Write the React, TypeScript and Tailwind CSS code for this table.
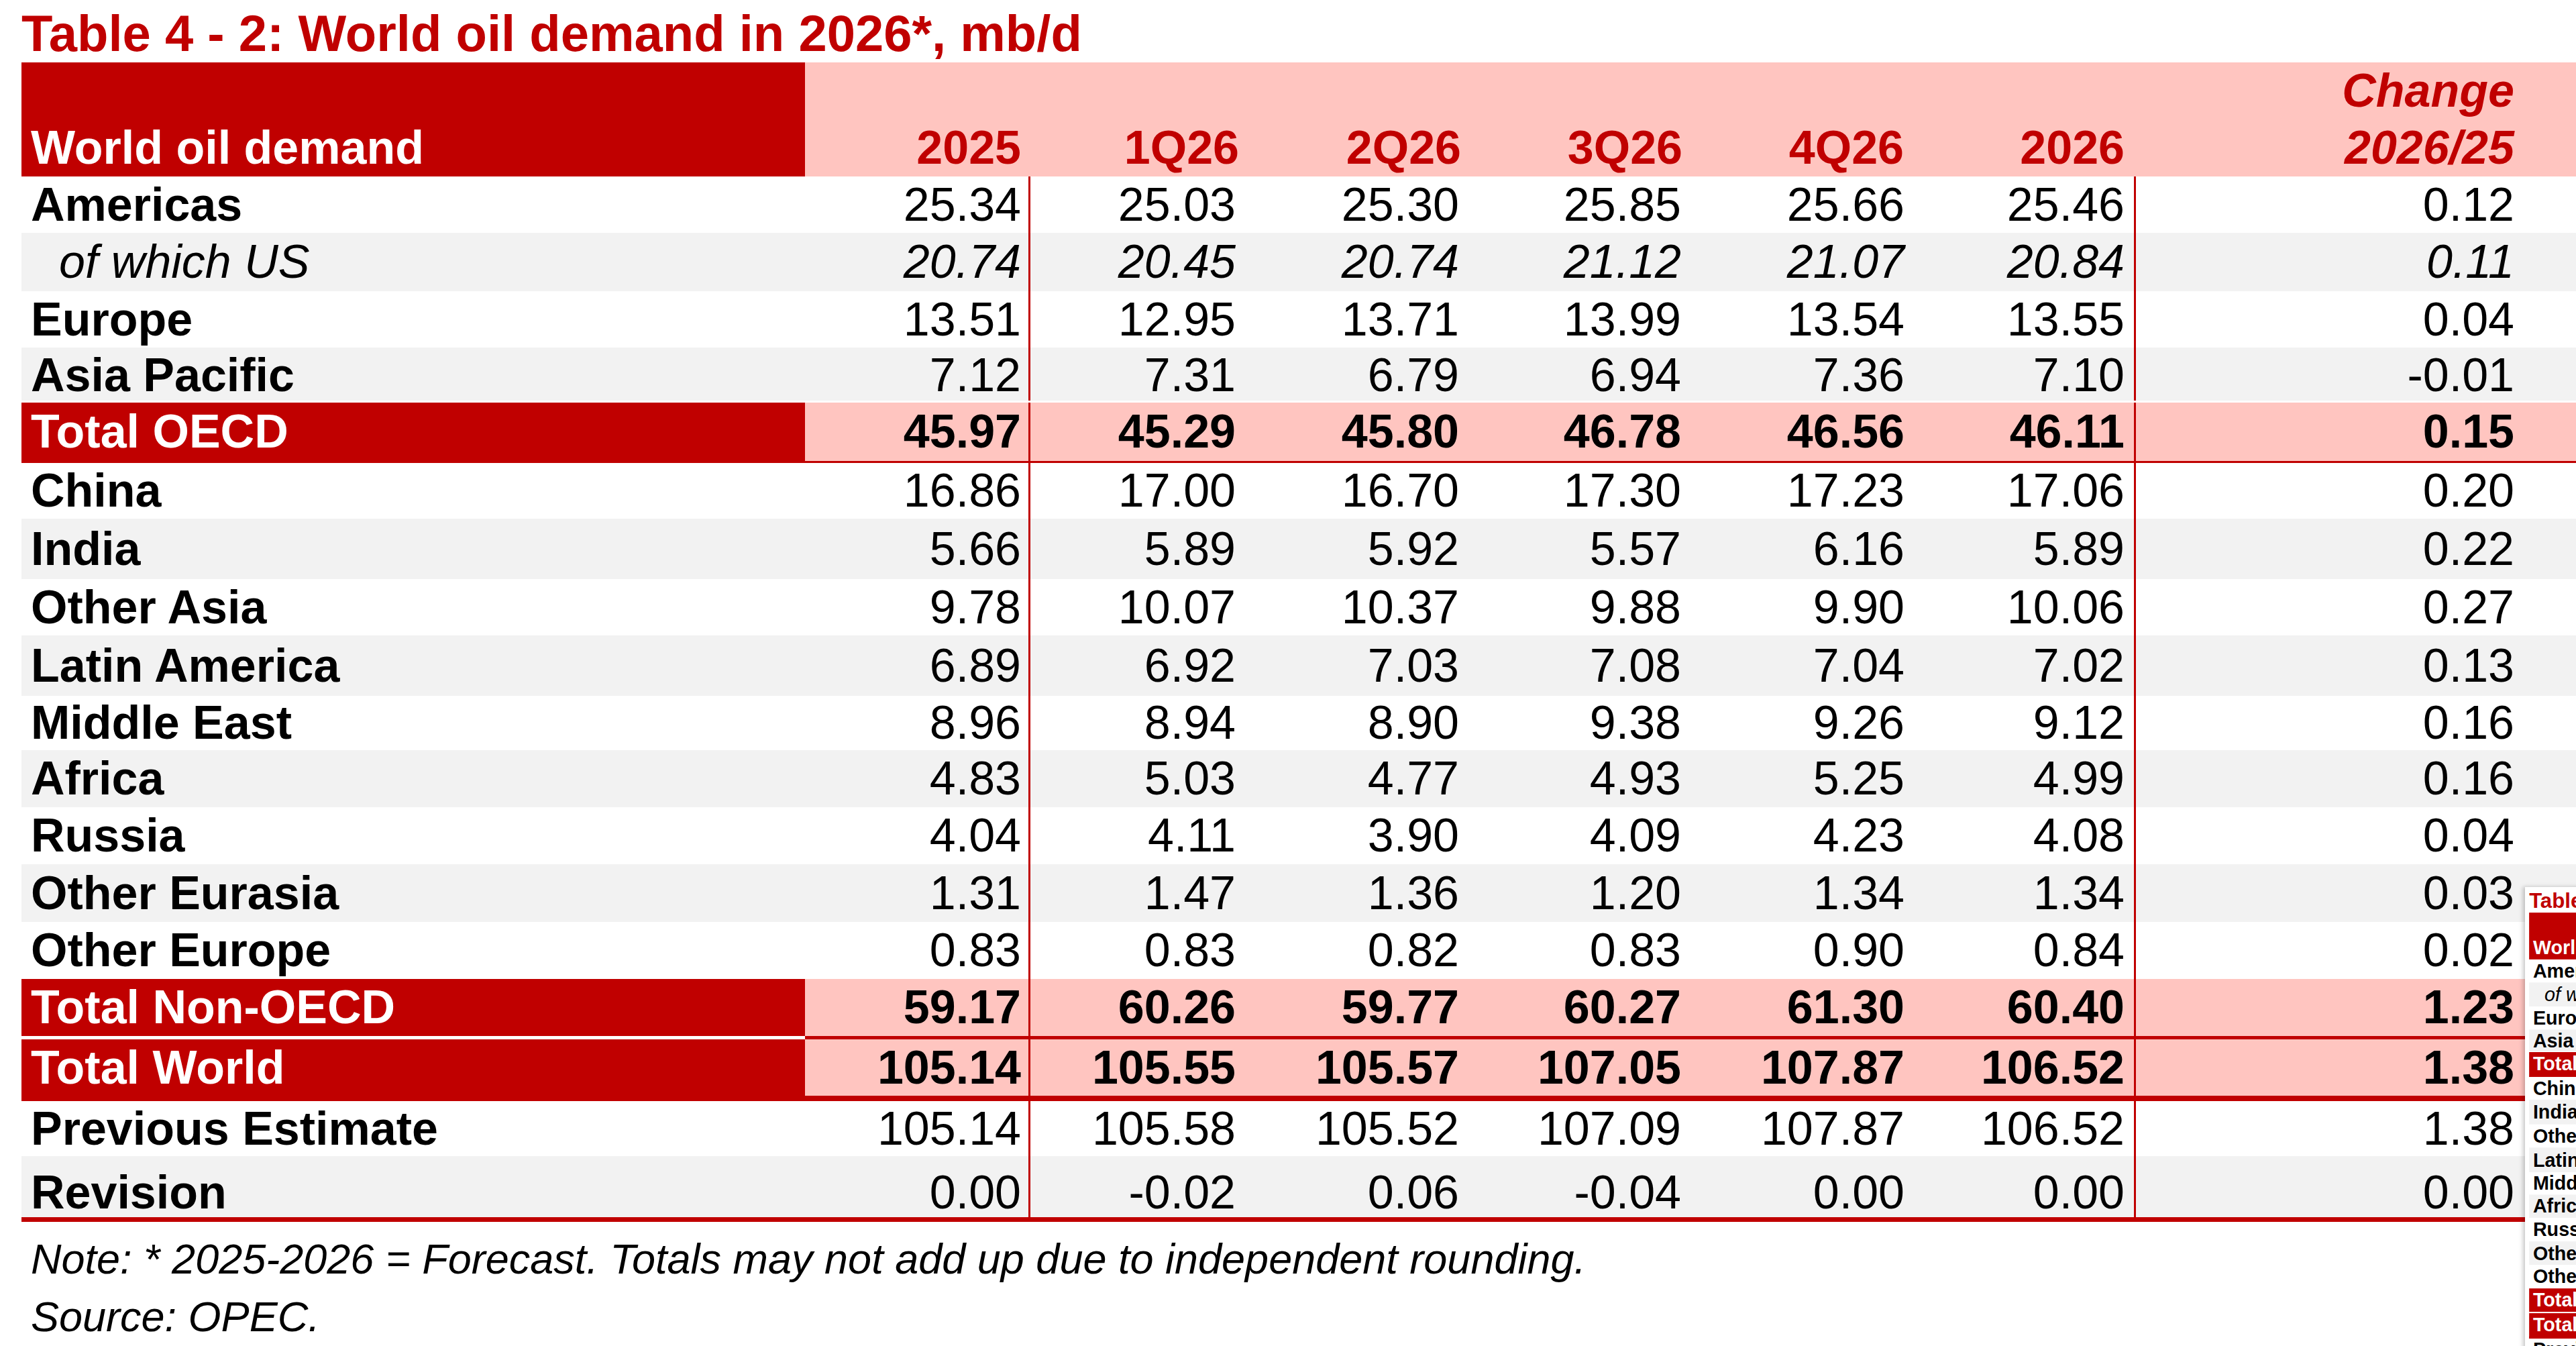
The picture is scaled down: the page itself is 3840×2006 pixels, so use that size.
import React from "react";

type Kind = "region" | "sub" | "total";

interface Row {
  label: string;
  values: string[];
  kind: Kind;
  h: string;
  gray?: boolean;
  labelB?: string;
  dataB?: string;
  after?: string;
  shift?: string;
}

const RED = "text-[#c00000]";

const rows: Row[] = [
  { label: "Americas", values: ["25.34", "25.03", "25.30", "25.85", "25.66", "25.46", "0.12"], kind: "region", h: "h-[84px]" },
  { label: "of which US", values: ["20.74", "20.45", "20.74", "21.12", "21.07", "20.84", "0.11"], kind: "sub", h: "h-[87px]", gray: true },
  { label: "Europe", values: ["13.51", "12.95", "13.71", "13.99", "13.54", "13.55", "0.04"], kind: "region", h: "h-[84px]" },
  { label: "Asia Pacific", values: ["7.12", "7.31", "6.79", "6.94", "7.36", "7.10", "-0.01"], kind: "region", h: "h-[79px]", gray: true, after: "mb-[3px]", shift: "pt-[4px]" },
  {
    label: "Total OECD", values: ["45.97", "45.29", "45.80", "46.78", "46.56", "46.11", "0.15"], kind: "total", h: "h-[90px]",
    labelB: "border-b-[3px] border-b-[#c00000]", dataB: "border-b-[3px] border-b-[#c00000]",
  },
  { label: "China", values: ["16.86", "17.00", "16.70", "17.30", "17.23", "17.06", "0.20"], kind: "region", h: "h-[83px]" },
  { label: "India", values: ["5.66", "5.89", "5.92", "5.57", "6.16", "5.89", "0.22"], kind: "region", h: "h-[90px]", gray: true },
  { label: "Other Asia", values: ["9.78", "10.07", "10.37", "9.88", "9.90", "10.06", "0.27"], kind: "region", h: "h-[84px]" },
  { label: "Latin America", values: ["6.89", "6.92", "7.03", "7.08", "7.04", "7.02", "0.13"], kind: "region", h: "h-[90px]", gray: true },
  { label: "Middle East", values: ["8.96", "8.94", "8.90", "9.38", "9.26", "9.12", "0.16"], kind: "region", h: "h-[81px]" },
  { label: "Africa", values: ["4.83", "5.03", "4.77", "4.93", "5.25", "4.99", "0.16"], kind: "region", h: "h-[85px]", gray: true },
  { label: "Russia", values: ["4.04", "4.11", "3.90", "4.09", "4.23", "4.08", "0.04"], kind: "region", h: "h-[85px]" },
  { label: "Other Eurasia", values: ["1.31", "1.47", "1.36", "1.20", "1.34", "1.34", "0.03"], kind: "region", h: "h-[86px]", gray: true },
  { label: "Other Europe", values: ["0.83", "0.83", "0.82", "0.83", "0.90", "0.84", "0.02"], kind: "region", h: "h-[85px]" },
  {
    label: "Total Non-OECD", values: ["59.17", "60.26", "59.77", "60.27", "61.30", "60.40", "1.23"], kind: "total", h: "h-[90px]",
    labelB: "border-b-[5px] border-b-white", dataB: "border-b-[5px] border-b-[#c00000]",
  },
  {
    label: "Total World", values: ["105.14", "105.55", "105.57", "107.05", "107.87", "106.52", "1.38"], kind: "total", h: "h-[92px]",
    labelB: "border-b-[8px] border-b-[#c00000]", dataB: "border-b-[8px] border-b-[#c00000]",
  },
  { label: "Previous Estimate", values: ["105.14", "105.58", "105.52", "107.09", "107.87", "106.52", "1.38"], kind: "region", h: "h-[82px]" },
  {
    label: "Revision", values: ["0.00", "-0.02", "0.06", "-0.04", "0.00", "0.00", "0.00"], kind: "region", h: "h-[98px]", gray: true,
    labelB: "border-b-[7px] border-b-[#c00000]", dataB: "border-b-[7px] border-b-[#c00000]", shift: "pt-[18px]",
  },
];

// column boxes: header version and body version (body ones carry the red rules)
const headCols = [
  "w-[336px] pr-[14px]",
  "w-[320px] pr-[9px]",
  "w-[333px] pr-[11px]",
  "w-[331px] pr-[12px]",
  "w-[333px] pr-[15px]",
  "w-[331px] pr-[17px]",
  "w-[656px] pr-[92px]",
];
const bodyCols = [
  "w-[336px] pr-[11px] border-r-[3px] border-r-[#c00000]",
  "w-[320px] pr-[14px]",
  "w-[333px] pr-[14px]",
  "w-[331px] pr-[14px]",
  "w-[333px] pr-[14px]",
  "w-[331px] pr-[14px] border-r-[3px] border-r-[#c00000]",
  "w-[656px] pr-[92px]",
];
const heads = ["2025", "1Q26", "2Q26", "3Q26", "4Q26", "2026"];

function TableRow({ row }: { row: Row }) {
  const total = row.kind === "total";
  const labelCls = total
    ? "bg-[#c00000] text-white font-bold pl-[14px]"
    : row.kind === "sub"
      ? "italic pl-[56px]"
      : "font-bold pl-[14px]";
  const valCls = total ? "bg-[#ffc5c0] font-bold" : row.kind === "sub" ? "italic" : "";
  const shift = row.shift ?? "";

  return (
    <div className={`flex ${row.h} ${row.gray ? "bg-[#f2f2f2]" : "bg-white"} ${row.after ?? ""}`}>
      <div className={`w-[1168px] shrink-0 flex items-center ${labelCls} ${shift} ${row.labelB ?? ""}`}>
        {row.label}
      </div>
      {row.values.map((v, i) => (
        <div key={i} className={`shrink-0 flex items-center justify-end ${bodyCols[i]} ${valCls} ${shift} ${row.dataB ?? ""}`}>
          {v}
        </div>
      ))}
    </div>
  );
}

function Sheet({ pad }: { pad: string }) {
  return (
    <div className={`${pad} w-[3840px] text-[70px] leading-[1.15] whitespace-nowrap`}>
      <h1 className={`pt-[6px] text-[76px] leading-[87px] font-bold ${RED}`}>
        Table 4 - 2: World oil demand in 2026*, mb/d
      </h1>

      <div className="flex h-[170px] bg-[#ffc5c0] leading-[85px]">
        <div className="w-[1168px] shrink-0 bg-[#c00000] text-white font-bold pl-[14px] flex items-end">
          World oil demand
        </div>
        {heads.map((h, i) => (
          <div key={h + i} className={`shrink-0 flex items-end justify-end font-bold ${RED} ${headCols[i]}`}>
            {h}
          </div>
        ))}
        <div className={`shrink-0 flex flex-col items-end justify-end font-bold italic ${RED} ${headCols[6]}`}>
          <span>Change</span>
          <span>2026/25</span>
        </div>
      </div>

      {rows.map((r) => (
        <TableRow key={r.label} row={r} />
      ))}

      <div className="pl-[14px] pt-[12px] italic text-[63px] leading-[86px]">
        <p>Note: * 2025-2026 = Forecast. Totals may not add up due to independent rounding.</p>
        <p>Source: OPEC.</p>
      </div>
    </div>
  );
}

export default function App() {
  return (
    <div className="relative w-[3840px] h-[2006px] overflow-hidden bg-white text-black font-['Liberation_Sans',Arial,sans-serif]">
      <Sheet pad="pl-[32px]" />

      {/* small page preview sitting over the bottom right corner */}
      <div className="absolute left-[3764px] top-[1322px] w-[200px] h-[800px] overflow-hidden bg-white shadow-[-3px_0_6px_rgba(0,0,0,0.22)]">
        <div className="origin-top-left scale-[0.41]">
          <Sheet pad="pl-[15px]" />
        </div>
      </div>
    </div>
  );
}
